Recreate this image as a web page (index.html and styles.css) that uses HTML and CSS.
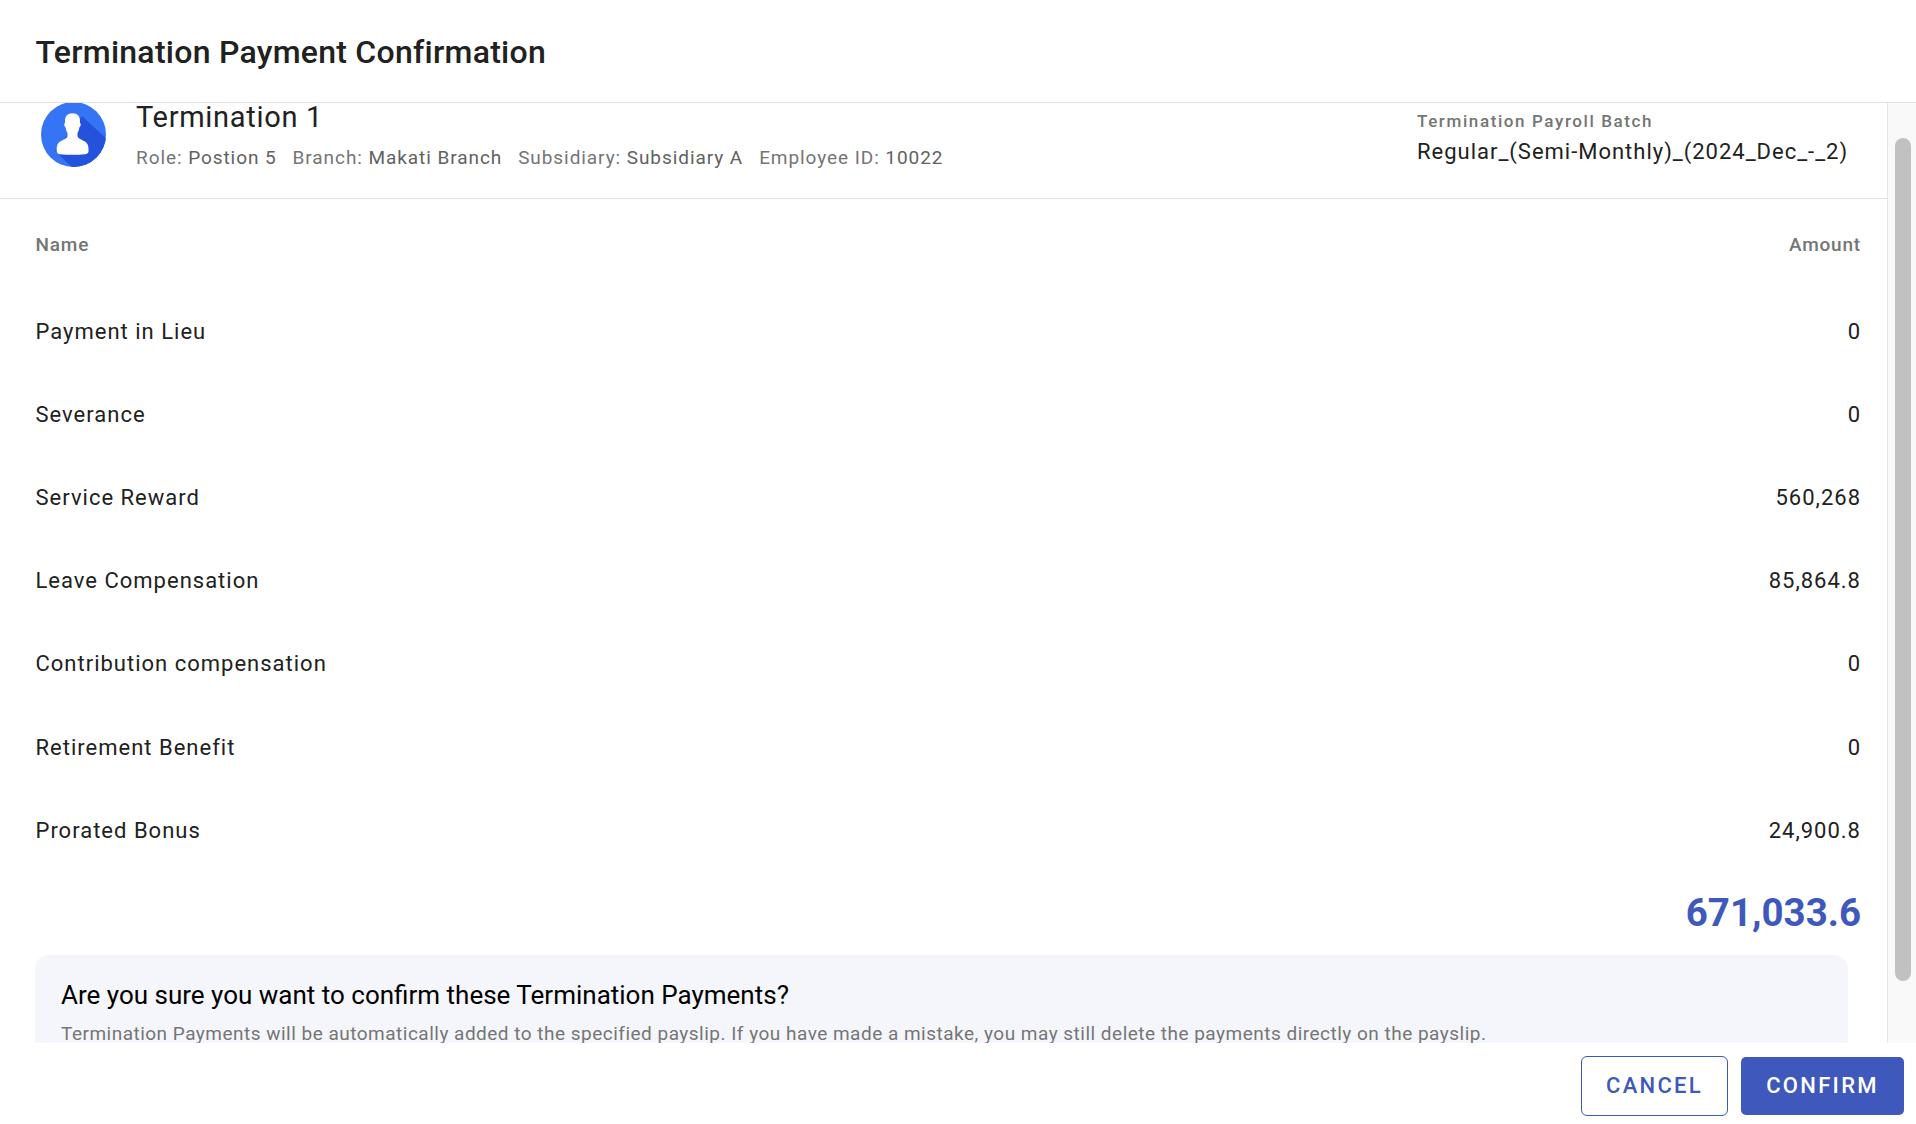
FILE: index.html
```html
<!DOCTYPE html>
<html lang="en">
<head>
<meta charset="utf-8">
<title>Termination Payment Confirmation</title>
<link rel="stylesheet" href="styles.css">
</head>
<body>
<div class="modal">
  <header class="modal-header"><h1>Termination Payment Confirmation</h1></header>
  <div class="modal-main">
    <div class="scroll-body">
      <section class="employee">
        <svg class="avatar" viewBox="0 1 65 64" aria-hidden="true">
          <defs><clipPath id="c"><circle cx="32.5" cy="32.5" r="32.5"/></clipPath></defs>
          <circle cx="32.5" cy="32.5" r="32.5" fill="#3574f4"/>
          <path clip-path="url(#c)" d="M41 14 L70 41 L70 70 L36 70 L14 49 Z" fill="#2452dc"/>
          <path d="M31.500 11.300 C26.500 11.300 24 14.500 24 18.500 L24 21 C23 21 23 24.500 24.400 25 C25 27.500 25.500 29.500 26.500 31 L26.500 34 C26.500 36 23 37.500 20 39 C17 40.500 15.700 43 15.700 47 L15.700 49.500 C15.700 51 17 52 19 52.200 C23 52.700 27 52.800 31.500 52.800 C36 52.800 40 52.700 44 52.200 C46 52 47.500 51 47.500 49.500 L47.500 47 C47.500 43 46 40.500 43 39 C40 37.500 36.500 36 36.500 34 L36.500 31 C37.500 29.500 38 27.500 38.600 25 C40 24.500 40 21 39 21 L39 18.500 C39 14.500 36.500 11.300 31.500 11.300 Z" fill="#fff"/>
        </svg>
        <div class="employee-info">
          <div class="employee-name">Termination 1</div>
          <div class="employee-meta">
            <span><i>Role:</i> Postion 5</span>
            <span><i>Branch:</i> Makati Branch</span>
            <span><i>Subsidiary:</i> Subsidiary A</span>
            <span><i>Employee ID:</i> 10022</span>
          </div>
        </div>
        <div class="batch">
          <div class="batch-label">Termination Payroll Batch</div>
          <div class="batch-value">Regular_(Semi-Monthly)_(2024_Dec_-_2)</div>
        </div>
      </section>
      <section class="table">
        <div class="table-head"><span>Name</span><span>Amount</span></div>
        <div class="row"><span>Payment in Lieu</span><span>0</span></div>
        <div class="row"><span>Severance</span><span>0</span></div>
        <div class="row"><span>Service Reward</span><span>560,268</span></div>
        <div class="row"><span>Leave Compensation</span><span>85,864.8</span></div>
        <div class="row"><span>Contribution compensation</span><span>0</span></div>
        <div class="row"><span>Retirement Benefit</span><span>0</span></div>
        <div class="row"><span>Prorated Bonus</span><span>24,900.8</span></div>
        <div class="total">671,033.6</div>
      </section>
      <section class="notice">
        <h2>Are you sure you want to confirm these Termination Payments?</h2>
        <p>Termination Payments will be automatically added to the specified payslip. If you have made a mistake, you may still delete the payments directly on the payslip.</p>
      </section>
    </div>
    <div class="scroll-track"><div class="scroll-thumb"></div></div>
  </div>
  <footer class="modal-footer">
    <button class="btn btn-outline">CANCEL</button>
    <button class="btn btn-solid">CONFIRM</button>
  </footer>
</div>
</body>
</html>
```
FILE: styles.css
```css
* { box-sizing: border-box; }
html, body { margin: 0; height: 100%; background: #fff; }
body { font-family: Roboto, "Liberation Sans", sans-serif; color: #212121; overflow: hidden; }
.modal { display: flex; flex-direction: column; height: 1124px; width: 1916px; }
.modal-header { height: 103px; flex: none; border-bottom: 1px solid #e0e0e6; padding: 1px 35.5px 0; display: flex; align-items: center; }
.modal-header h1 { margin: 0; font-size: 32px; font-weight: 500; letter-spacing: 0.26px; color: #212121; }
.modal-main { height: 940px; flex: none; display: flex; }
.scroll-body { flex: 1; min-width: 0; clip-path: inset(-8px 0 0 0); }
.scroll-track { width: 29px; flex: none; background: #f9f9f9; border-left: 1px solid #e6e6e6; padding: 35px 5px 0 7px; }
.scroll-thumb { height: 843px; background: #c1c1c1; border-radius: 8px; }
.employee { height: 96px; border-bottom: 1px solid #e0e0e6; display: flex; padding-left: 41px; }
.avatar { width: 65px; height: 64px; flex: none; }
.employee-info { margin-left: 30px; }
.employee-name { font-size: 29px; line-height: 28px; letter-spacing: 0.7px; }
.employee-meta { display: flex; gap: 16px; margin-top: 15px; font-size: 19px; line-height: 24px; letter-spacing: 0.93px; color: #616161; }
.employee-meta i { font-style: normal; color: #757575; }
.batch { margin-left: auto; margin-right: 41px; width: 429px; padding-top: 8px; white-space: nowrap; }
.batch-label { font-size: 17px; font-weight: 500; line-height: 20px; letter-spacing: 1.6px; color: #757575; }
.batch-value { font-size: 22px; line-height: 26px; margin-top: 8px; letter-spacing: 0.99px; }
.table { padding: 0 26px 0 35.5px; }
.table-head { display: flex; justify-content: space-between; font-size: 19px; font-weight: 500; line-height: 24px; letter-spacing: 0.8px; color: #757575; padding-top: 34px; }
.row { display: flex; justify-content: space-between; align-items: center; height: 83.1px; font-size: 22px; letter-spacing: 1px; }
.table-head + .row { margin-top: 33px; }
.total { text-align: right; font-size: 38.5px; font-weight: 700; line-height: 48px; color: #3f58bb; margin-top: 17.350px; }
.notice { margin: 18px 39px 0 35px; background: #f5f6fb; border-radius: 14px; padding: 24px 26px; }
.notice h2 { margin: 0; font-size: 26px; font-weight: 400; line-height: 32px; color: #000; }
.notice p { margin: 11px 0 0; font-size: 19px; line-height: 24px; letter-spacing: 0.49px; color: #757575; }
.modal-footer { flex: none; height: 81px; display: flex; justify-content: flex-end; gap: 12px; padding: 13px 11px 0 0; background: #fff; position: relative; }
.btn { font-family: inherit; font-size: 22px; font-weight: 500; letter-spacing: 2.3px; height: 60px; border-radius: 6px; padding: 0 0 2px; }
.btn-outline { width: 147px; background: #fff; color: #3f58bb; border: 1px solid #3f58bb; }
.btn-solid { width: 165px; background: #3f58bb; background-clip: padding-box; color: #fff; border: 1px solid transparent; }
```
